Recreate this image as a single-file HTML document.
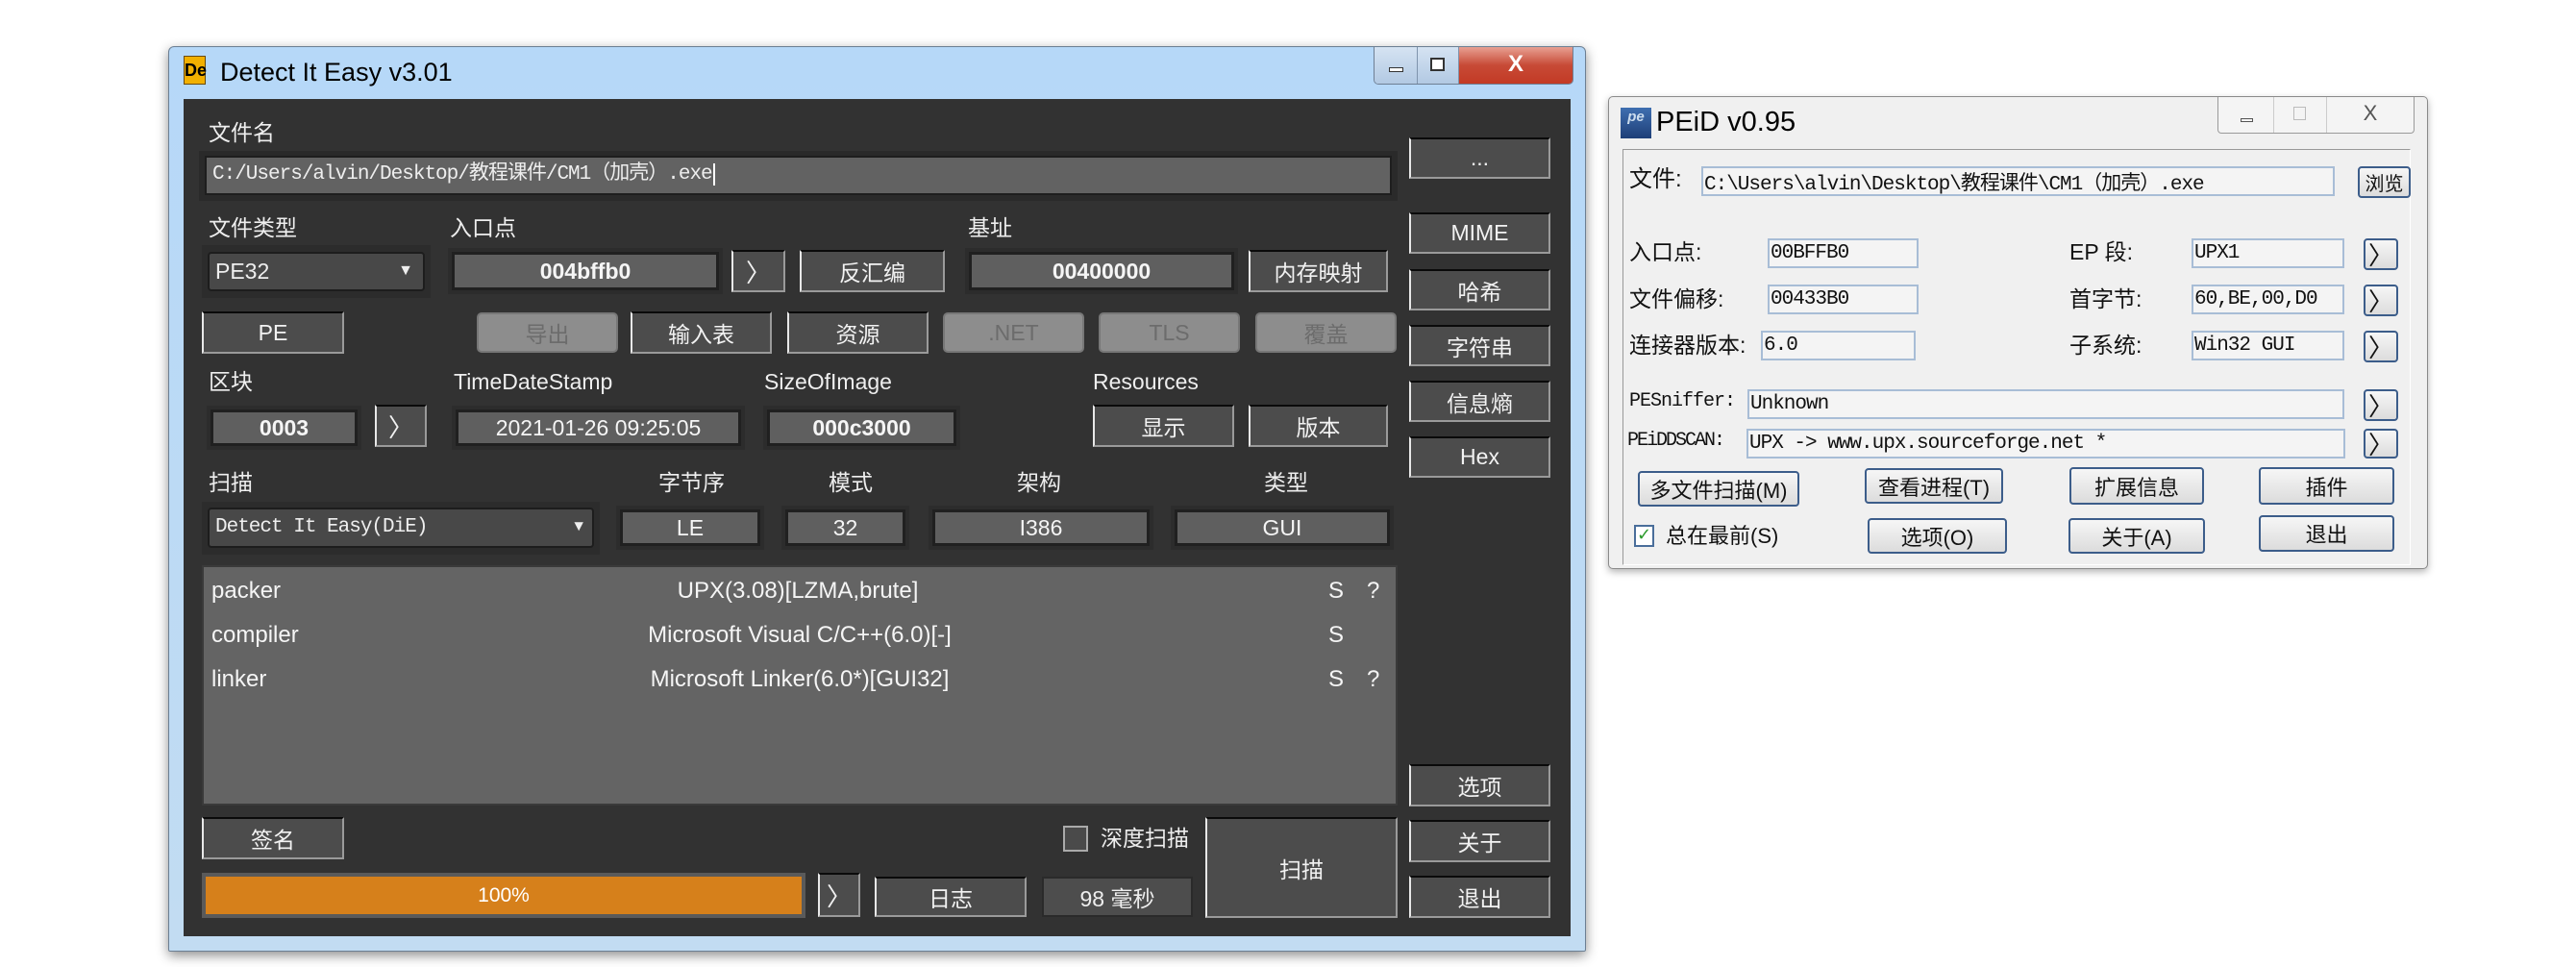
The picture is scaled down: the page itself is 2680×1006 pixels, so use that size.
<!DOCTYPE html>
<html><head><meta charset="utf-8"><style>
*{margin:0;padding:0;box-sizing:border-box}
body{width:2680px;height:1006px;background:#fff;position:relative;overflow:hidden;font-family:"Liberation Sans Narrow","Liberation Sans","Noto Sans CJK SC",sans-serif}
.a{position:absolute}
.lbl{position:absolute;color:#eee;font-size:23px;line-height:1;white-space:nowrap}
.btn{position:absolute;background:#4c4c4c;border:2px solid;border-color:#0a0a0a #9a9a9a #9a9a9a #e8e8e8;color:#f2f2f2;font-size:23px;display:flex;align-items:center;justify-content:center;white-space:nowrap}
.dis{position:absolute;background:#8d8d8d;border:2px solid #777;border-radius:5px;color:#6c6c6c;font-size:23px;display:flex;align-items:center;justify-content:center}
.fld{position:absolute;background:#5f5f5f;border:3px solid #202020;outline:4px solid #2c2c2c;color:#f5f5f5;font-size:23px;display:flex;align-items:center;justify-content:center;white-space:nowrap;font-weight:bold}
.pl{position:absolute;color:#111;font-size:22px;white-space:nowrap;font-family:"Liberation Sans","Noto Sans CJK SC",sans-serif;line-height:1}
.pi{position:absolute;background:#f4f4f4;border:2px solid #a8bdd6;color:#111;font-size:21px;font-family:"Liberation Mono","Noto Sans CJK SC",monospace;display:flex;align-items:center;padding-left:1px;white-space:nowrap;overflow:hidden;letter-spacing:-1px}
.pb{position:absolute;background:linear-gradient(#f6f6f6,#dcdcdc);border:2px solid #3c5d8a;border-radius:4px;color:#111;font-size:22px;display:flex;align-items:center;justify-content:center;font-family:"Liberation Sans","Noto Sans CJK SC",sans-serif;white-space:nowrap}
.arr{font-size:26px}
</style></head><body>

<div class="a" style="left:175px;top:48px;width:1475px;height:942px;background:linear-gradient(#b6d8f8,#c2dcf2);border:1px solid #6c7f93;border-radius:6px 6px 2px 2px;box-shadow:0 4px 12px rgba(0,0,0,.45)"></div>
<div class="a" style="left:191px;top:58px;width:23px;height:30px;background:#f2b000;border:1px solid #6a4a00;font:bold 18px 'Liberation Sans';color:#000;line-height:28px;text-align:center">De</div>
<div class="a" style="left:229px;top:60px;font-size:27px;color:#000;font-family:'Liberation Sans Narrow','Liberation Sans',sans-serif">Detect It Easy v3.01</div>
<div class="a" style="left:1429px;top:49px;width:208px;height:39px;border:1px solid #6f7f94;border-top:none;border-radius:0 0 5px 5px;overflow:hidden;display:flex">
 <div style="width:45px;background:linear-gradient(#d5e3f2,#b2c9e3);border-right:1px solid #7f94ad;position:relative"><div class="a" style="left:15px;top:21px;width:15px;height:5px;border:1px solid #333;background:#fff"></div></div>
 <div style="width:43px;background:linear-gradient(#d5e3f2,#b2c9e3);border-right:1px solid #7f94ad;position:relative"><div class="a" style="left:13px;top:11px;width:15px;height:14px;border:2px solid #333;background:#fff"></div></div>
 <div style="flex:1;background:linear-gradient(#e8a092,#c74a36 50%,#c33a25);color:#fff;font:bold 24px 'Liberation Sans';text-align:center;line-height:36px">X</div>
</div>
<div class="a" style="left:191px;top:103px;width:1443px;height:871px;background:#323232"></div>

<div class="lbl" style="left:217px;top:127px">文件名</div>
<div class="a" style="left:207px;top:157px;width:1247px;height:52px;background:#2a2a2a"></div>
<div class="a" style="left:213px;top:162px;width:1235px;height:41px;background:#626262;border:2px solid #1e1e1e;color:#eee;font:21px 'Liberation Mono','Noto Sans CJK SC',monospace;line-height:36px;padding-left:6px;letter-spacing:-1px">C:/Users/alvin/Desktop/教程课件/CM1（加壳）.exe<span style="border-left:2px solid #fff;margin-left:1px"></span></div>
<div class="btn" style="left:1466px;top:143px;width:147px;height:43px">...</div>

<div class="lbl" style="left:217px;top:226px">文件类型</div>
<div class="lbl" style="left:468px;top:226px">入口点</div>
<div class="lbl" style="left:1007px;top:226px">基址</div>
<div class="a" style="left:210px;top:255px;width:238px;height:55px;background:#2c2c2c"></div>
<div class="a" style="left:216px;top:262px;width:226px;height:41px;background:#484848;border:2px solid #1d1d1d;border-radius:4px;color:#eee;font-size:23px;line-height:36px;padding-left:6px">PE32<span class="a" style="right:10px;top:0;font-size:16px">▼</span></div>

<div class="fld" style="left:470px;top:262px;width:278px;height:40px">004bffb0</div>
<div class="btn" style="left:761px;top:260px;width:56px;height:44px"><span class="arr">〉</span></div>
<div class="btn" style="left:832px;top:260px;width:151px;height:44px">反汇编</div>
<div class="fld" style="left:1008px;top:262px;width:276px;height:40px">00400000</div>
<div class="btn" style="left:1299px;top:260px;width:145px;height:44px">内存映射</div>

<div class="btn" style="left:1466px;top:221px;width:147px;height:43px">MIME</div>
<div class="btn" style="left:1466px;top:280px;width:147px;height:43px">哈希</div>
<div class="btn" style="left:1466px;top:338px;width:147px;height:43px">字符串</div>
<div class="btn" style="left:1466px;top:396px;width:147px;height:43px">信息熵</div>
<div class="btn" style="left:1466px;top:454px;width:147px;height:43px">Hex</div>

<div class="btn" style="left:210px;top:324px;width:148px;height:44px">PE</div>
<div class="dis" style="left:496px;top:325px;width:147px;height:42px">导出</div>
<div class="btn" style="left:656px;top:324px;width:147px;height:44px">输入表</div>
<div class="btn" style="left:819px;top:324px;width:147px;height:44px">资源</div>
<div class="dis" style="left:981px;top:325px;width:147px;height:42px">.NET</div>
<div class="dis" style="left:1143px;top:325px;width:147px;height:42px">TLS</div>
<div class="dis" style="left:1306px;top:325px;width:147px;height:42px">覆盖</div>

<div class="lbl" style="left:217px;top:386px">区块</div>
<div class="lbl" style="left:472px;top:386px">TimeDateStamp</div>
<div class="lbl" style="left:795px;top:386px">SizeOfImage</div>
<div class="lbl" style="left:1137px;top:386px">Resources</div>
<div class="fld" style="left:219px;top:426px;width:153px;height:38px">0003</div>
<div class="btn" style="left:390px;top:421px;width:54px;height:44px"><span class="arr">〉</span></div>
<div class="fld" style="left:474px;top:426px;width:297px;height:38px;font-weight:normal">2021-01-26 09:25:05</div>
<div class="fld" style="left:798px;top:426px;width:197px;height:38px">000c3000</div>
<div class="btn" style="left:1137px;top:421px;width:147px;height:44px">显示</div>
<div class="btn" style="left:1299px;top:421px;width:145px;height:44px">版本</div>

<div class="lbl" style="left:217px;top:491px">扫描</div>
<div class="lbl" style="left:685px;top:491px">字节序</div>
<div class="lbl" style="left:862px;top:491px">模式</div>
<div class="lbl" style="left:1058px;top:491px">架构</div>
<div class="lbl" style="left:1315px;top:491px">类型</div>
<div class="a" style="left:210px;top:522px;width:414px;height:55px;background:#2c2c2c"></div>
<div class="a" style="left:216px;top:528px;width:402px;height:42px;background:#484848;border:2px solid #1d1d1d;border-radius:4px;color:#eee;font:21px 'Liberation Mono',monospace;line-height:37px;padding-left:6px;letter-spacing:-1px">Detect It Easy(DiE)<span class="a" style="right:10px;top:0;font-size:16px">▼</span></div>
<div class="fld" style="left:645px;top:530px;width:146px;height:38px;font-weight:normal">LE</div>
<div class="fld" style="left:817px;top:530px;width:125px;height:38px;font-weight:normal">32</div>
<div class="fld" style="left:970px;top:530px;width:226px;height:38px;font-weight:normal">I386</div>
<div class="fld" style="left:1222px;top:530px;width:224px;height:38px;font-weight:normal">GUI</div>

<div class="a" style="left:210px;top:588px;width:1244px;height:250px;background:#646464;border:2px solid #3a3a3a;color:#f5f5f5;font-size:24px;font-family:'Liberation Sans Narrow','Liberation Sans',sans-serif">
 <div class="a" style="left:8px;top:11px">packer</div><div class="a" style="left:0;width:1240px;text-align:center;top:11px;padding-right:4px">UPX(3.08)[LZMA,brute]</div><div class="a" style="left:1170px;top:11px">S</div><div class="a" style="left:1210px;top:11px">?</div>
 <div class="a" style="left:8px;top:57px">compiler</div><div class="a" style="left:0;width:1240px;text-align:center;top:57px">Microsoft Visual C/C++(6.0)[-]</div><div class="a" style="left:1170px;top:57px">S</div>
 <div class="a" style="left:8px;top:103px">linker</div><div class="a" style="left:0;width:1240px;text-align:center;top:103px">Microsoft Linker(6.0*)[GUI32]</div><div class="a" style="left:1170px;top:103px">S</div><div class="a" style="left:1210px;top:103px">?</div>
</div>

<div class="btn" style="left:1466px;top:795px;width:147px;height:44px">选项</div>
<div class="btn" style="left:210px;top:850px;width:148px;height:44px">签名</div>
<div class="a" style="left:1106px;top:859px;width:26px;height:27px;background:#4a4a4a;border:2px solid #aaa"></div>
<div class="lbl" style="left:1145px;top:861px">深度扫描</div>
<div class="btn" style="left:1254px;top:850px;width:200px;height:105px">扫描</div>
<div class="btn" style="left:1466px;top:853px;width:147px;height:44px">关于</div>
<div class="btn" style="left:1466px;top:911px;width:147px;height:44px">退出</div>
<div class="a" style="left:210px;top:908px;width:628px;height:47px;background:#5a5a5a;padding:4px"><div style="width:100%;height:100%;background:#d6801b;color:#fff;font-size:21px;display:flex;align-items:center;justify-content:center">100%</div></div>
<div class="btn" style="left:851px;top:908px;width:44px;height:46px"><span class="arr">〉</span></div>
<div class="btn" style="left:910px;top:912px;width:158px;height:42px">日志</div>
<div class="a" style="left:1084px;top:912px;width:157px;height:42px;background:#4d4d4d;border:2px solid #2a2a2a;color:#eee;font-size:23px;display:flex;align-items:center;justify-content:center">98 毫秒</div>

<!-- PEiD window -->
<div class="a" style="left:1673px;top:100px;width:853px;height:492px;background:#f0f0f0;border:1px solid #8a8a8a;border-radius:5px;box-shadow:0 3px 8px rgba(0,0,0,.3)"></div>
<div class="a" style="left:1686px;top:112px;width:32px;height:32px;background:linear-gradient(#3f6fb0,#1e3f78);color:#cde;font:italic bold 15px 'Liberation Sans';text-align:center;line-height:20px">pe</div>
<div class="a" style="left:1723px;top:111px;font:29px 'Liberation Sans Narrow','Liberation Sans',sans-serif;color:#000">PEiD v0.95</div>
<div class="a" style="left:2307px;top:101px;width:205px;height:38px;border:1px solid #9a9a9a;border-top:none;border-radius:0 0 4px 4px;background:#f4f4f4;display:flex">
 <div style="width:58px;border-right:1px solid #ccc;position:relative"><div class="a" style="left:23px;top:22px;width:13px;height:4px;border:1px solid #555"></div></div>
 <div style="width:55px;border-right:1px solid #ccc;position:relative"><div class="a" style="left:20px;top:10px;width:13px;height:14px;border:1px solid #bbb"></div></div>
 <div style="flex:1;text-align:center;font:22px 'Liberation Sans';color:#555;line-height:34px">X</div>
</div>
<div class="a" style="left:1688px;top:155px;width:820px;height:433px;border:1px solid #999;border-right-color:#fff;border-bottom-color:#fff"></div>

<div class="pl" style="left:1695px;top:175px;font-size:24px">文件:</div>
<div class="pi" style="left:1770px;top:173px;width:659px;height:31px">C:\Users\alvin\Desktop\教程课件\CM1（加壳）.exe</div>
<div class="pb" style="left:2453px;top:173px;width:55px;height:33px;font-size:20px">浏览</div>

<div class="pl" style="left:1695px;top:251px;font-size:23px">入口点:</div>
<div class="pi" style="left:1839px;top:248px;width:157px;height:31px">00BFFB0</div>
<div class="pl" style="left:2153px;top:251px;font-size:23px">EP 段:</div>
<div class="pi" style="left:2280px;top:248px;width:159px;height:31px">UPX1</div>
<div class="pb" style="left:2459px;top:248px;width:36px;height:33px"><span class="arr">〉</span></div>

<div class="pl" style="left:1695px;top:300px;font-size:23px">文件偏移:</div>
<div class="pi" style="left:1839px;top:296px;width:157px;height:31px">00433B0</div>
<div class="pl" style="left:2153px;top:300px;font-size:23px">首字节:</div>
<div class="pi" style="left:2280px;top:296px;width:159px;height:31px">60,BE,00,D0</div>
<div class="pb" style="left:2459px;top:296px;width:36px;height:33px"><span class="arr">〉</span></div>

<div class="pl" style="left:1695px;top:348px;font-size:23px">连接器版本:</div>
<div class="pi" style="left:1832px;top:344px;width:161px;height:31px">6.0</div>
<div class="pl" style="left:2153px;top:348px;font-size:23px">子系统:</div>
<div class="pi" style="left:2280px;top:344px;width:159px;height:31px">Win32 GUI</div>
<div class="pb" style="left:2459px;top:344px;width:36px;height:33px"><span class="arr">〉</span></div>

<div class="pl" style="left:1695px;top:408px;font-family:'Liberation Mono',monospace;font-size:20px;letter-spacing:-1px">PESniffer:</div>
<div class="pi" style="left:1818px;top:405px;width:621px;height:31px">Unknown</div>
<div class="pb" style="left:2459px;top:405px;width:36px;height:33px"><span class="arr">〉</span></div>
<div class="pl" style="left:1693px;top:449px;font-family:'Liberation Mono',monospace;font-size:20px;letter-spacing:-2px">PEiDDSCAN:</div>
<div class="pi" style="left:1817px;top:446px;width:623px;height:31px">UPX -&gt; www.upx.sourceforge.net *</div>
<div class="pb" style="left:2459px;top:446px;width:36px;height:31px"><span class="arr">〉</span></div>

<div class="pb" style="left:1704px;top:490px;width:168px;height:37px">多文件扫描(M)</div>
<div class="pb" style="left:1940px;top:487px;width:144px;height:37px">查看进程(T)</div>
<div class="pb" style="left:2153px;top:486px;width:140px;height:39px">扩展信息</div>
<div class="pb" style="left:2350px;top:486px;width:141px;height:39px">插件</div>
<div class="a" style="left:1700px;top:546px;width:21px;height:23px;border:2px solid #4a6e9a;background:#fff;color:#2b9a2b;font:bold 18px 'DejaVu Sans';line-height:18px;text-align:center">✓</div>
<div class="pl" style="left:1733px;top:547px">总在最前(S)</div>
<div class="pb" style="left:1943px;top:539px;width:145px;height:37px">选项(O)</div>
<div class="pb" style="left:2152px;top:539px;width:142px;height:37px">关于(A)</div>
<div class="pb" style="left:2350px;top:536px;width:141px;height:38px">退出</div>
</body></html>
